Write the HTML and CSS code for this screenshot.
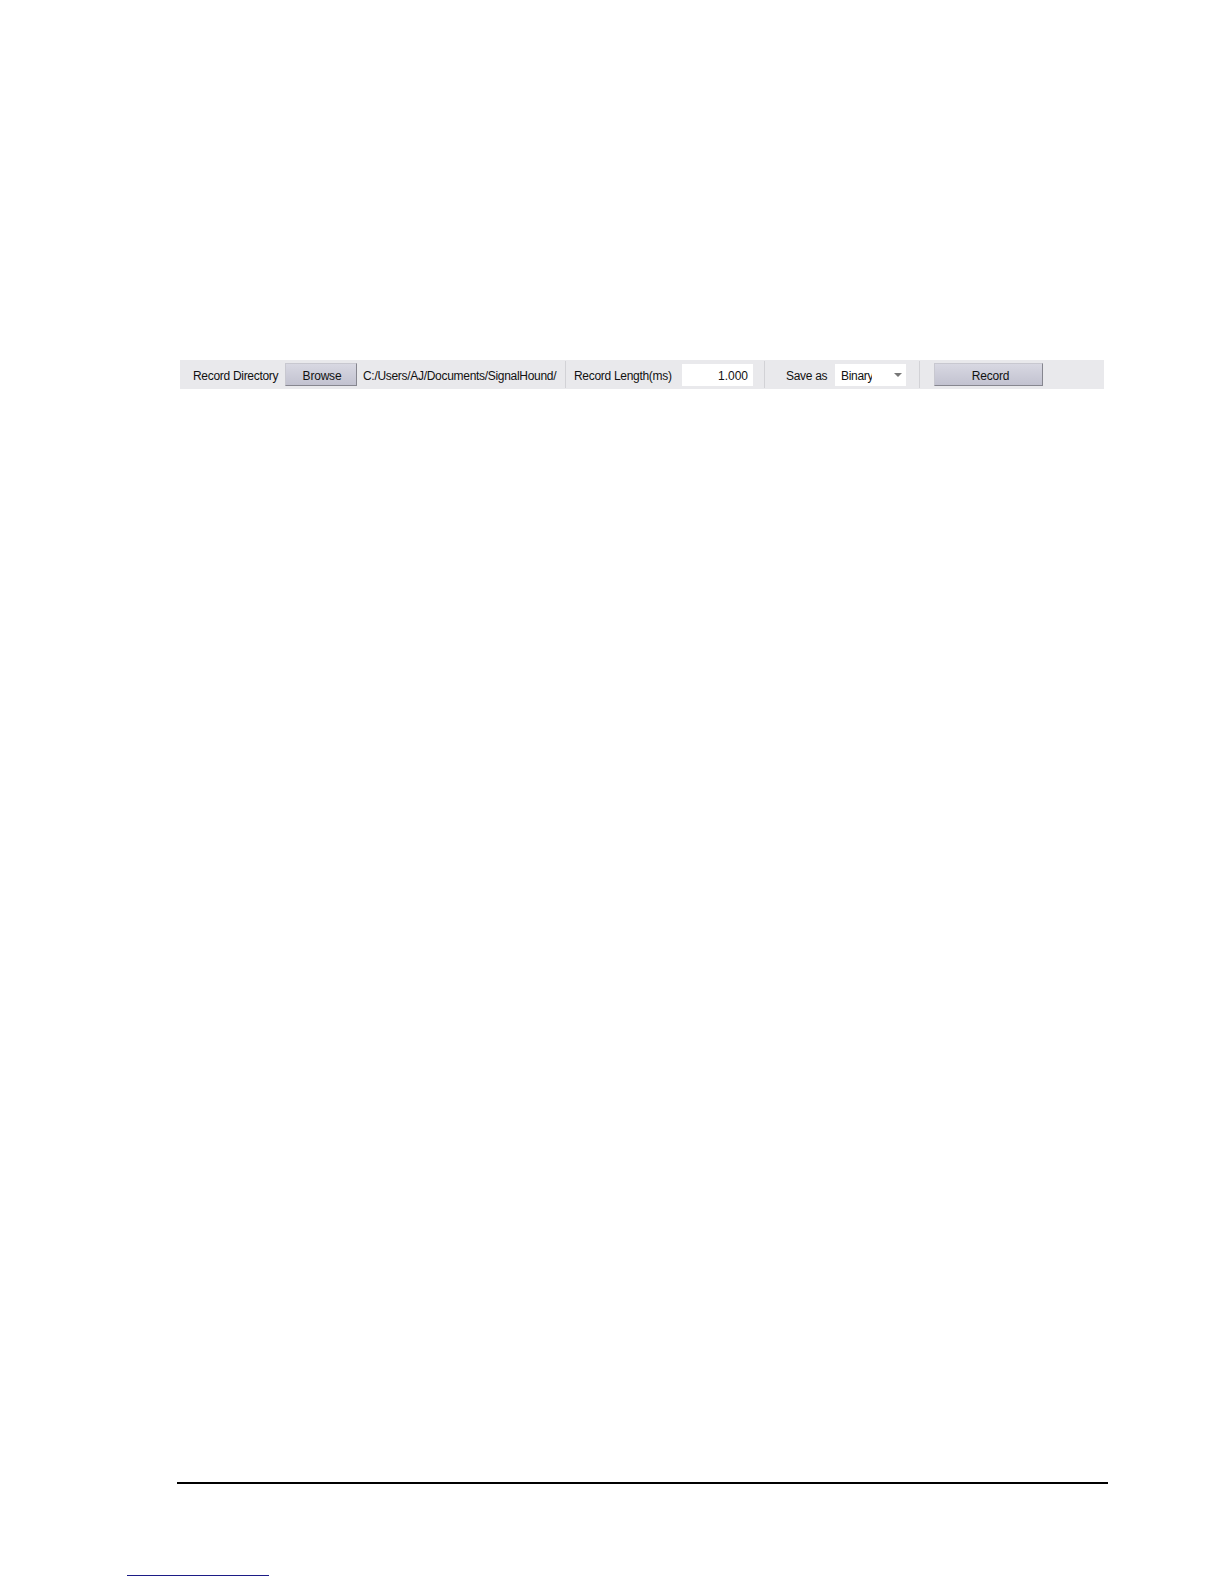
FILE: index.html
```html
<!DOCTYPE html>
<html>
<head>
<meta charset="utf-8">
<link rel="stylesheet" href="styles.css">
</head>
<body>
<div class="page">
  <div class="toolbar">
    <span class="label lbl-dir">Record Directory</span>
    <button class="btn btn-browse">Browse</button>
    <span class="label lbl-path">C:/Users/AJ/Documents/SignalHound/</span>
    <span class="sep sep1"></span>
    <span class="label lbl-len">Record Length(ms)</span>
    <span class="field field-len">1.000</span>
    <span class="sep sep2"></span>
    <span class="label lbl-save">Save as</span>
    <span class="field field-select"><span class="sel-text">Binary</span><span class="arrow"></span></span>
    <span class="sep sep3"></span>
    <button class="btn btn-record">Record</button>
  </div>
  <div class="footer-rule"></div>
  <div class="link-line"></div>
</div>
</body>
</html>
```

FILE: styles.css
```css
html, body {
  margin: 0;
  padding: 0;
  background: #ffffff;
}
.page {
  width: 1224px;
  height: 1584px;
  padding-top: 360px;
  box-sizing: border-box;
  font-family: "Liberation Sans", Arial, sans-serif;
  font-size: 12px;
  color: #111111;
}
.toolbar {
  margin-left: 180px;
  width: 924px;
  height: 29px;
  background: #e9e9ec;
  display: flex;
  align-items: center;
  box-sizing: border-box;
  padding-left: 13px;
}
.label {
  white-space: nowrap;
  letter-spacing: -0.3px;
  overflow: hidden;
  padding-top: 2px;
}
.lbl-dir { width: 92px; }
.btn {
  font-family: "Liberation Sans", Arial, sans-serif;
  font-size: 12px;
  color: #111111;
  height: 23px;
  padding: 2px 0 0 0;
  margin: 0;
  border: 1px solid #c8c8d0;
  border-right-color: #86868f;
  border-bottom-color: #86868f;
  background: linear-gradient(#d8d8e2, #c2c2d0);
  box-sizing: border-box;
  letter-spacing: -0.2px;
}
.btn-browse { width: 72px; margin-right: 6px; padding-left: 2px; }
.lbl-path { width: 197px; }
.sep {
  width: 1px;
  height: 27px;
  background: #d2d2d6;
}
.sep1 { margin-left: 5px; margin-right: 8px; }
.lbl-len { width: 108px; }
.field {
  height: 22px;
  background: #ffffff;
  display: flex;
  align-items: center;
  box-sizing: border-box;
  padding-top: 2px;
}
.field-len {
  width: 71px;
  justify-content: flex-end;
  padding-right: 5px;
}
.sep2 { margin-left: 11px; margin-right: 21px; }
.lbl-save { width: 49px; }
.field-select {
  width: 71px;
  padding-left: 6px;
  justify-content: space-between;
  padding-right: 4px;
}
.sel-text {
  width: 31px;
  overflow: hidden;
  white-space: nowrap;
  letter-spacing: -0.3px;
}
.arrow {
  width: 0;
  height: 0;
  border-left: 4px solid transparent;
  border-right: 4px solid transparent;
  border-top: 4px solid #777777;
  margin-top: -1px;
}
.sep3 { margin-left: 13px; margin-right: 14px; }
.btn-record { width: 109px; padding-left: 4px; }
.footer-rule {
  margin-top: 1093px;
  margin-left: 177px;
  width: 931px;
  height: 2px;
  background: #000000;
}
.link-line {
  margin-top: 91px;
  margin-left: 127px;
  width: 142px;
  height: 1px;
  background: #1c1c86;
}
```
